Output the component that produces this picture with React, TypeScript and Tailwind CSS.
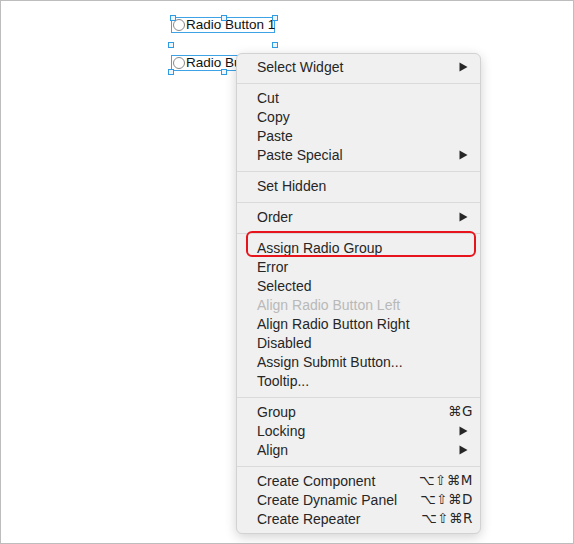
import React from "react";

type Item = {
  label: string;
  arrow?: boolean;
  shortcut?: string;
  disabled?: boolean;
};

const groups: Item[][] = [
  [{ label: "Select Widget", arrow: true }],
  [
    { label: "Cut" },
    { label: "Copy" },
    { label: "Paste" },
    { label: "Paste Special", arrow: true },
  ],
  [{ label: "Set Hidden" }],
  [{ label: "Order", arrow: true }],
  [
    { label: "Assign Radio Group" },
    { label: "Error" },
    { label: "Selected" },
    { label: "Align Radio Button Left", disabled: true },
    { label: "Align Radio Button Right" },
    { label: "Disabled" },
    { label: "Assign Submit Button..." },
    { label: "Tooltip..." },
  ],
  [
    { label: "Group", shortcut: "⌘G" },
    { label: "Locking", arrow: true },
    { label: "Align", arrow: true },
  ],
  [
    { label: "Create Component", shortcut: "⌥⇧⌘M" },
    { label: "Create Dynamic Panel", shortcut: "⌥⇧⌘D" },
    { label: "Create Repeater", shortcut: "⌥⇧⌘R" },
  ],
];

// selection handle, centred on a point of the group's bounding box
function Handle({ className }: { className: string }) {
  return <div className={`absolute w-[6px] h-[6px] border border-[#2f9be3] bg-[#eef6fc] ${className}`} />;
}

function RadioWidget({ label }: { label: string }) {
  return (
    <div className="w-[104px] h-[16px] border border-[#3ea2e6] flex items-center">
      <span className="ml-[1px] w-[12px] h-[12px] rounded-full border border-[#8a8a8a] bg-white shrink-0" />
      <span className="ml-[1px] text-[13.5px] leading-none text-[#111] whitespace-nowrap">{label}</span>
    </div>
  );
}

function Row({ item }: { item: Item }) {
  return (
    <div className="h-[19px] flex items-center pl-5 pr-[7px] pb-px">
      <span className={`flex-1 text-[14px] leading-none whitespace-nowrap ${item.disabled ? "text-[#b9b9b9]" : "text-[#262626]"}`}>
        {item.label}
      </span>
      {item.shortcut ? (
        <span className="text-[13.5px] leading-none text-[#262626] tracking-[0.5px] font-['DejaVu_Sans',sans-serif]">{item.shortcut}</span>
      ) : null}
      {item.arrow ? (
        <svg width="9" height="10" viewBox="0 0 9 10" className="mr-[5px]">
          <path d="M0.5 0.5 L8.5 5 L0.5 9.5 Z" fill="#262626" />
        </svg>
      ) : null}
    </div>
  );
}

export default function App() {
  return (
    <div className="relative w-[574px] h-[544px] bg-white border border-[#bdbdbd] overflow-hidden font-['Liberation_Sans',Arial,sans-serif]">
      {/* selected radio buttons on the canvas */}
      <div className="absolute left-[170px] top-[16px] w-[104px] h-[54px] flex flex-col justify-between">
        <RadioWidget label="Radio Button 1" />
        <RadioWidget label="Radio Button 2" />
        <Handle className="-left-[1px] -top-[2px]" />
        <Handle className="left-[50px] -top-[2px]" />
        <Handle className="left-[101px] -top-[2px]" />
        <Handle className="-left-[3px] top-[25px]" />
        <Handle className="left-[101px] top-[25px]" />
        <Handle className="-left-[3px] top-[52px]" />
        <Handle className="left-[50px] top-[52px]" />
      </div>

      {/* context menu */}
      <div className="absolute left-[235px] top-[52px] w-[245px] rounded-[6px] border border-[#d2d2d2] bg-[#f0f0f0] py-1 shadow-[0_3px_12px_rgba(0,0,0,0.18)]">
        {groups.map((g, gi) => (
          <div key={gi}>
            {gi > 0 ? (
              <div className="h-[12px] flex items-center">
                <div className="h-px w-full bg-[#dadada]" />
              </div>
            ) : null}
            {g.map((it) => (
              <Row key={it.label} item={it} />
            ))}
          </div>
        ))}
      </div>

      {/* annotation highlight */}
      <div className="absolute left-[245px] top-[230px] w-[230px] h-[26px] rounded-[6px] border-2 border-[#e8141b]" />
    </div>
  );
}
